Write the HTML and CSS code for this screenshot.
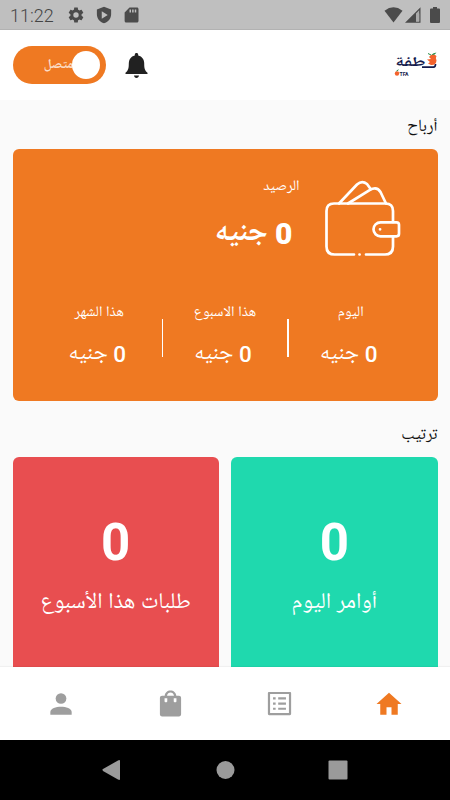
FILE: index.html
```html
<!DOCTYPE html>
<html lang="ar" dir="rtl">
<head>
    <meta charset="UTF-8">
    <meta name="viewport" content="width=device-width, initial-scale=1.0">
    <title>قطفة</title>
    <link rel="stylesheet" href="styles.css">
</head>
<body>

<div class="status-bar" dir="ltr">
    <span class="clock">11:22</span>
    <svg class="gear" width="18" height="18" viewBox="0 0 24 24"><path d="M19.4 13c.1-.7.1-1.300 0-2l2.100-1.600c.2-.2.3-.4.100-.7l-2-3.400c-.1-.2-.4-.3-.6-.2l-2.500 1c-.5-.4-1.100-.7-1.700-1L14.400 2.400c0-.2-.2-.4-.5-.4h-3.800c-.3 0-.5.2-.5.4l-.4 2.700c-.6.3-1.200.6-1.700 1L5 5.100c-.2-.1-.5 0-.6.2l-2 3.400c-.1.3 0 .5.100.7L4.600 11c-.1.700-.1 1.300 0 2l-2.100 1.600c-.1.200-.2.400-.1.700l2 3.400c.1.200.4.300.6.200l2.500-1c.5.400 1.100.700 1.700 1l.4 2.700c0 .2.200.4.500.4h3.800c.3 0 .5-.2.500-.4l.4-2.700c.6-.3 1.200-.6 1.700-1l2.500 1c.2.100.5 0 .6-.2l2-3.400c.2-.3.100-.5-.1-.7L19.400 13zM12 15.600a3.600 3.600 0 1 1 0-7.200 3.600 3.600 0 0 1 0 7.200z"/></svg>
    <svg class="shield" width="18" height="18" viewBox="0 0 24 24"><path fill-rule="evenodd" d="M12 1L2.500 4.500V11c0 5.800 4 10.500 9.500 12 5.500-1.500 9.500-6.200 9.500-12V4.500L12 1zM9 7l8 5-8 5V7z"/></svg>
    <svg class="sd" width="18" height="18" viewBox="0 0 24 24"><path fill-rule="evenodd" d="M20 2H10L3.500 8.500V20c0 1.100.9 2 2 2H20c1.100 0 2-.9 2-2V4c0-1.100-.9-2-2-2zM10 4.500h2v4h-2v-4zm3.500 0h2v4h-2v-4zm3.500 0h2v4h-2v-4z"/></svg>
    <div class="signals">
        <svg width="19" height="16" viewBox="0 0 19 16"><path d="M.5 3.700Q9.500-3 18.500 3.700L9.500 15.500z"/></svg>
        <svg width="16" height="16" viewBox="0 0 16 16"><path fill-rule="evenodd" d="M0 15.700L15.500.2v15.500zM11 6.500v8h3.200v-8z"/><path fill="#aaa" d="M11 6.500l3.200-3.200v11.200H11z"/></svg>
        <svg class="battery" width="10" height="16" viewBox="0 0 10 16"><path d="M3 0h4v1.500h2q1 0 1 1V15q0 1-1 1H1q-1 0-1-1V2.500q0-1 1-1h2z"/></svg>
    </div>
</div>

<header class="header" dir="ltr">
    <div class="toggle">
        <span class="toggle-text">متصل</span>
        <span class="knob"></span>
    </div>
    <svg class="bell" width="23" height="27" viewBox="0 0 23 27"><path d="M11.500 1c1 0 1.700.700 1.700 1.700v.7c4 .9 6 4.200 6 8.100 0 5.200.8 7.400 3.300 9.200V22H.5v-1.300c2.500-1.800 3.300-4 3.300-9.200 0-3.900 2-7.200 6-8.100v-.7c0-1 .7-1.700 1.700-1.700zM9 23.500h5c-.2 1.600-1.200 2.500-2.500 2.500S9.200 25.100 9 23.500z"/></svg>
    <svg class="logo" width="44" height="28" viewBox="0 0 44 28">
        <text class="logo-name" x="16" y="17" text-anchor="middle" textLength="31" lengthAdjust="spacingAndGlyphs">طفة</text>
        <path d="M28 16.200H39.500Q41.500 16.200 41.500 13" fill="none" stroke="#141b4d" stroke-width="1.700"/>
        <path d="M35 6Q38.500 1 42.500 5Q41 7.500 42.500 9.500Q42 14.500 37 14L34 12.500L36 11L33 8.500L37 8z" fill="#f4622c"/>
        <path d="M37.500 4.200Q39 1.200 42.500 1.800Q41 4 37.500 4.200z" fill="#238b45"/>
        <path d="M34 2.500l3 1.500" stroke="#238b45"/>
        <circle cx="3" cy="22.500" r="2.200" fill="#f4622c"/>
        <path d="M2.500 20l2-1.200" stroke="#238b45"/>
        <text class="logo-sub" x="5.500" y="25" direction="ltr" textLength="9" lengthAdjust="spacingAndGlyphs">TFA</text>
    </svg>
</header>

<main class="content">
    <h3 class="title">أرباح</h3>
    <div class="balance-card">
        <div class="balance-top">
            <svg class="wallet" width="76" height="77" viewBox="0 0 76 77">
                <path d="M29 74.500H9.500Q1.500 74.500 1.500 66.500V31Q1.500 23.500 9 23.500H60.500Q68 23.500 68 31V42M68 56.500V66.500Q68 74.500 60 74.500H41"/>
                <path d="M55.500 42.300H71.500Q74 42.300 74 44.800V53.800Q74 56.300 71.500 56.300H55.500A7 7 0 0 1 55.500 42.300z"/>
                <path d="M14 23.500L32 4.500Q37 0 42 4L46 9.500M23 23.500L45 9.800Q52 6 55.500 12L61 23.500"/>
                <path d="M34.500 74.500h.1M55 49.300h.1"/>
            </svg>
            <div class="balance-text">
                <div class="label">الرصيد</div>
                <div class="amount"><b>0</b> جنيه</div>
            </div>
        </div>
        <div class="periods">
            <div class="period">
                <div class="label">اليوم</div>
                <div class="value"><b>0</b> جنيه</div>
            </div>
            <div class="period">
                <div class="label">هذا الاسبوع</div>
                <div class="value"><b>0</b> جنيه</div>
            </div>
            <div class="period">
                <div class="label">هذا الشهر</div>
                <div class="value"><b>0</b> جنيه</div>
            </div>
        </div>
    </div>

    <h3 class="title">ترتيب</h3>
    <div class="orders">
        <div class="order-card green">
            <div class="count">0</div>
            <div class="order-label">أوامر اليوم</div>
        </div>
        <div class="order-card red">
            <div class="count">0</div>
            <div class="order-label">طلبات هذا الأسبوع</div>
        </div>
    </div>
</main>

<nav class="tabs">
    <a class="tab active"><svg width="30" height="30" viewBox="0 0 24 24"><path d="M10 20.500v-6h4v6h5v-8.500h3L12 3 2 12h3v8.500z"/></svg></a>
    <a class="tab"><svg width="31" height="31" viewBox="0 0 24 24"><path fill-rule="evenodd" d="M20 3H4c-.6 0-1 .4-1 1v16c0 .6.4 1 1 1h16c.6 0 1-.4 1-1V4c0-.6-.4-1-1-1zM4.700 4.700h14.600v14.600H4.700zM7 7.200h2v1.700H7zM11 7.200h6v1.700h-6zM7 11.200h2v1.700H7zM11 11.200h6v1.700h-6zM7 15.200h2v1.700H7zM11 15.200h6v1.700h-6z"/></svg></a>
    <a class="tab"><svg width="31" height="31" viewBox="0 0 24 24"><path fill-rule="evenodd" d="M7.500 6C7.800 3.600 9.600 2 12 2s4.200 1.600 4.500 4H18.500c1 0 1.700.7 1.700 1.700v12.600c0 1-.7 1.700-1.700 1.700h-13c-1 0-1.700-.7-1.700-1.700V7.700c0-1 .7-1.700 1.700-1.700zm1.800 0h5.400C14.400 4.400 13.300 3.500 12 3.500S9.600 4.400 9.300 6zM7.400 8v2.300q0 .7.700.7h.7q.7 0 .7-.7V8zM14.500 8v2.300q0 .7.700.7h.7q.7 0 .7-.7V8z"/></svg></a>
    <a class="tab"><svg width="32" height="32" viewBox="0 0 24 24"><circle cx="12" cy="7.900" r="4"/><path d="M4 20v-2c0-2.700 4.300-4 8-4s8 1.300 8 4v2z"/></svg></a>
</nav>

<div class="system-nav" dir="ltr">
    <svg width="225" height="20" viewBox="0 0 225 20"><path d="M-.5 10Q-1 10 0 9L15 .5Q17-.5 17 1V19Q17 20.500 15 19.500L0 11z"/><circle cx="122.500" cy="10" r="9"/><rect x="225.500" y=".5" width="19" height="19" rx="1"/></svg>
</div>

</body>
</html>
```

FILE: styles.css
```css
* {
    box-sizing: border-box;
}

body {
    margin: 0;
    height: 800px;
    display: flex;
    flex-direction: column;
    overflow: hidden;
    background-color: #fafafa;
    font-family: Roboto, "Noto Naskh Arabic UI", "Noto Sans Arabic", "DejaVu Sans", sans-serif;
    color: #111;
}

svg {
    display: block;
    flex: none;
}

.status-bar {
    display: flex;
    align-items: center;
    height: 30px;
    flex: none;
    padding: 0 10px;
    background-color: #bfbfbf;
    border-bottom: 1px solid #b2b2b2;
    color: #444;
    fill: #4b4b4b;
}

.clock {
    width: 57px;
    padding-top: 1px;
    font-size: 18px;
    font-weight: 300;
}

.shield {
    margin-left: 10px;
}

.sd {
    margin-left: 9px;
}

.signals {
    display: flex;
    margin-left: auto;
    gap: 2px;
}

.battery {
    margin-left: 7px;
}

.header {
    display: flex;
    align-items: center;
    height: 70px;
    flex: none;
    padding: 0 12px 0 12.5px;
    background-color: #fff;
}

.toggle {
    display: flex;
    align-items: center;
    justify-content: flex-end;
    width: 93.5px;
    height: 37.5px;
    padding-right: 6.5px;
    border-radius: 19px;
    background-color: #ef7922;
}

.toggle-text {
    margin-right: -2px;
    font-size: 13px;
    font-weight: bold;
    color: #fbdcc5;
}

.knob {
    width: 28px;
    height: 28px;
    border-radius: 50%;
    background-color: #fff;
    z-index: 1;
}

.bell {
    margin-left: 19px;
    fill: #212121;
}

.logo {
    margin-left: auto;
}

.logo-name {
    font-size: 14px;
    font-weight: bold;
    fill: #141b4d;
}

.logo-sub {
    font-size: 4.5px;
    font-weight: bold;
    fill: #141b4d;
}

.content {
    flex: 1;
    min-height: 0;
    padding: 0 12.5px;
    overflow: hidden;
}

.title {
    height: 49px;
    margin: 0;
    font-size: 17px;
    font-weight: normal;
    line-height: 54px;
}

.balance-card {
    height: 252px;
    margin-bottom: 6.5px;
    border-radius: 6px;
    background-color: #ef7922;
    color: #fff;
}

.balance-top {
    display: flex;
    height: 152px;
    padding: 31px 37px 0 0;
}

.wallet {
    fill: none;
    stroke: #fff;
    stroke-width: 2.7;
    stroke-linecap: round;
    stroke-linejoin: round;
}

.balance-text {
    margin-right: 25px;
}

.label {
    height: 20px;
    font-size: 14.7px;
    line-height: 25px;
    white-space: nowrap;
}

.balance-top .label {
    margin-top: -5px;
}

.amount {
    margin: 18px 7px 0 0;
    font-size: 30px;
    font-weight: bold;
    line-height: 42px;
    white-space: nowrap;
}

.periods {
    display: flex;
    padding: 0 24px;
}

.period {
    position: relative;
    flex: 1;
    text-align: center;
}

.period + .period::before {
    content: "";
    position: absolute;
    top: 18px;
    right: -1px;
    width: 1.5px;
    height: 38px;
    background-color: #fff;
}

.value {
    margin-top: 18px;
    padding-right: 4px;
    font-size: 22.5px;
    line-height: 30px;
    white-space: nowrap;
}

.value b {
    font-weight: 500;
}

.orders {
    display: flex;
    gap: 12.5px;
}

.order-card {
    flex: 1;
    height: 240px;
    padding-top: 55px;
    border-radius: 6px;
    color: #fff;
    text-align: center;
}

.green {
    background-color: #1fd9ae;
}

.red {
    background-color: #e84e50;
}

.count {
    font-size: 51px;
    font-weight: bold;
    line-height: 62px;
}

.order-label {
    margin-top: 12px;
    font-size: 22.4px;
    line-height: 34px;
    white-space: nowrap;
}

.tabs {
    display: flex;
    align-items: center;
    height: 73px;
    flex: none;
    padding: 0 6.5px;
    background-color: #fff;
    box-shadow: 0 -1px 1px rgba(0, 0, 0, 0.04);
    z-index: 1;
}

.tab {
    display: flex;
    flex: 1;
    justify-content: center;
    fill: #9e9e9e;
}

.active {
    fill: #ef7922;
}

.system-nav {
    display: flex;
    align-items: center;
    height: 60px;
    flex: none;
    padding-left: 102.5px;
    background-color: #000;
    fill: #9a9a9a;
}

.system-nav svg {
    overflow: visible;
}
```
